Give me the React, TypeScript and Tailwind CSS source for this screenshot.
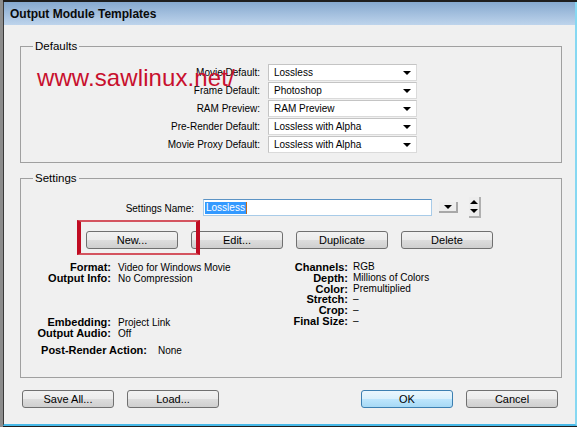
import React from 'react';

const defaults = [
  { label: 'Movie Default:', value: 'Lossless' },
  { label: 'Frame Default:', value: 'Photoshop' },
  { label: 'RAM Preview:', value: 'RAM Preview' },
  { label: 'Pre-Render Default:', value: 'Lossless with Alpha' },
  { label: 'Movie Proxy Default:', value: 'Lossless with Alpha' },
];

const rightInfo = [
  { label: 'Channels:', value: 'RGB' },
  { label: 'Depth:', value: 'Millions of Colors' },
  { label: 'Color:', value: 'Premultiplied' },
  { label: 'Stretch:', value: '–' },
  { label: 'Crop:', value: '–' },
  { label: 'Final Size:', value: '–' },
];

function Button({ label, primary }: { label: string; primary?: boolean }) {
  return (
    <div
      className={
        primary
          ? 'w-[92px] h-[18px] flex items-center justify-center rounded-[3px] border border-[#3c7fb1] bg-[linear-gradient(#eaf6fd,#d9f0fc_50%,#bee6fd_50%,#a7d9f5)] text-[11px] leading-none text-black'
          : 'w-[92px] h-[18px] flex items-center justify-center rounded-[3px] border border-[#707070] bg-[linear-gradient(#f2f2f2,#ebebeb_50%,#dddddd_50%,#cfcfcf)] text-[11px] leading-none text-black'
      }
    >
      {label}
    </div>
  );
}

function DownArrow() {
  return <span className="w-0 h-0 border-x-[4px] border-x-transparent border-t-[4px] border-t-black" />;
}

function UpArrow() {
  return <span className="w-0 h-0 border-x-[4px] border-x-transparent border-b-[4px] border-b-black" />;
}

function Select({ value }: { value: string }) {
  return (
    <div className="h-[17px] flex items-center justify-between bg-white border border-[#dadada] border-t-[#c4c4c4] border-l-[#c4c4c4] pl-[5px] pr-[5px] text-[10px] text-black">
      <span>{value}</span>
      <DownArrow />
    </div>
  );
}

export default function App() {
  return (
    <div className="w-[577px] h-[427px] flex bg-[#1e1e1e] font-['Liberation_Sans',Arial,sans-serif] text-black overflow-hidden">
      <div className="w-[3px] bg-[#8c8c8c]" />
      <div className="flex-1 flex flex-col mt-[2px] mb-[1px] border-l border-l-[#3a3a3a] border-r-2 border-r-[#86d8f2] border-b-2 border-b-[#48b9e8] bg-[#f0f0f0]">
        {/* Title bar */}
        <div className="h-[23px] flex items-center pl-[6px] pt-[1px] bg-gradient-to-b from-[#86a9cf] to-[#bed4ec]">
          <span className="text-[12px] font-bold text-[#0a0a0a]">Output Module Templates</span>
        </div>

        {/* Body */}
        <div className="relative flex-1 flex flex-col pl-[16px] pt-[14px]">
          {/* Watermark */}
          <div className="absolute left-[33px] top-[39px] text-[24px] leading-[28px] tracking-[0.1px] text-[#c8102e] pointer-events-none">
            www.sawlinux.net/
          </div>

          {/* Defaults */}
          <fieldset className="w-[542px] border border-[#a0a0a0] pt-[11px] pb-[9px]">
            <legend className="ml-[12px] px-[2px] text-[11.5px] leading-[14px] text-black">Defaults</legend>
            <div className="grid grid-cols-[239px_149px] gap-x-[8px] gap-y-[1px]">
              {defaults.map((d) => (
                <React.Fragment key={d.label}>
                  <div className="h-[17px] text-right text-[10px] leading-[18px]">{d.label}</div>
                  <Select value={d.value} />
                </React.Fragment>
              ))}
            </div>
          </fieldset>

          {/* Settings */}
          <fieldset className="w-[542px] mt-[8px] border border-[#a0a0a0] pb-[21px]">
            <legend className="ml-[12px] px-[2px] text-[11.5px] leading-[14px] text-black">Settings</legend>

            <div className="flex items-center h-[21px] mt-[12px]">
              <div className="w-[173px] text-right text-[10px] pt-[1px]">Settings Name:</div>
              <div className="ml-[9px] w-[229px] h-[17px] flex items-center bg-white border border-[#a8cbe8] border-t-[#5c93c4] pl-[1px]">
                <span className="bg-[#3399ff] text-white text-[10px] leading-[12px] px-[1px]">Lossless</span>
                <span className="w-[1px] h-[12px] bg-[#c06a1c]" />
              </div>
              <div className="ml-[7px] w-[19px] h-[11px] flex items-center justify-center bg-[#ededed] border-r-2 border-b-2 border-r-[#a8a8a8] border-b-[#a8a8a8]">
                <DownArrow />
              </div>
              <div className="ml-[11px] w-[12px] h-[21px] flex flex-col items-center justify-between py-[3px] bg-[#ededed] border-r-2 border-b-2 border-r-[#b0b0b0] border-b-[#b0b0b0]">
                <UpArrow />
                <DownArrow />
              </div>
            </div>

            <div className="relative flex gap-[13px] mt-[13px] ml-[65px]">
              <Button label="New..." />
              <Button label="Edit..." />
              <Button label="Duplicate" />
              <Button label="Delete" />
              <div className="absolute left-[-9px] top-[-11px] w-[123px] h-[35px] border-y-2 border-y-[#d4545f] border-x-[4px] border-x-[#c00c22]" />
            </div>

            <div className="flex mt-[13px] text-[10px]">
              <div className="w-[220px] flex flex-col">
                <div className="flex leading-[11px]">
                  <span className="w-[90px] text-right font-bold text-[11px]">Format:</span>
                  <span className="ml-[7px]">Video for Windows Movie</span>
                </div>
                <div className="flex leading-[11px]">
                  <span className="w-[90px] text-right font-bold text-[11px]">Output Info:</span>
                  <span className="ml-[7px]">No Compression</span>
                </div>
                <div className="flex leading-[11px] mt-[33px]">
                  <span className="w-[90px] text-right font-bold text-[11px]">Embedding:</span>
                  <span className="ml-[7px]">Project Link</span>
                </div>
                <div className="flex leading-[11px]">
                  <span className="w-[90px] text-right font-bold text-[11px]">Output Audio:</span>
                  <span className="ml-[7px]">Off</span>
                </div>
              </div>
              <div className="flex flex-col">
                {rightInfo.map((r) => (
                  <div key={r.label} className="flex leading-[10.8px]">
                    <span className="w-[107px] text-right font-bold text-[11px]">{r.label}</span>
                    <span className="ml-[5px]">{r.value}</span>
                  </div>
                ))}
              </div>
            </div>

            <div className="flex mt-[6px] leading-[11px] text-[10px]">
              <span className="w-[126px] text-right font-bold text-[11px]">Post-Render Action:</span>
              <span className="ml-[11px]">None</span>
            </div>
          </fieldset>

          {/* Bottom buttons */}
          <div className="w-[536px] ml-[2px] mt-[12px] flex justify-between">
            <div className="flex gap-[13px]">
              <Button label="Save All..." />
              <Button label="Load..." />
            </div>
            <div className="flex gap-[13px]">
              <Button label="OK" primary />
              <Button label="Cancel" />
            </div>
          </div>
        </div>
      </div>
    </div>
  );
}
